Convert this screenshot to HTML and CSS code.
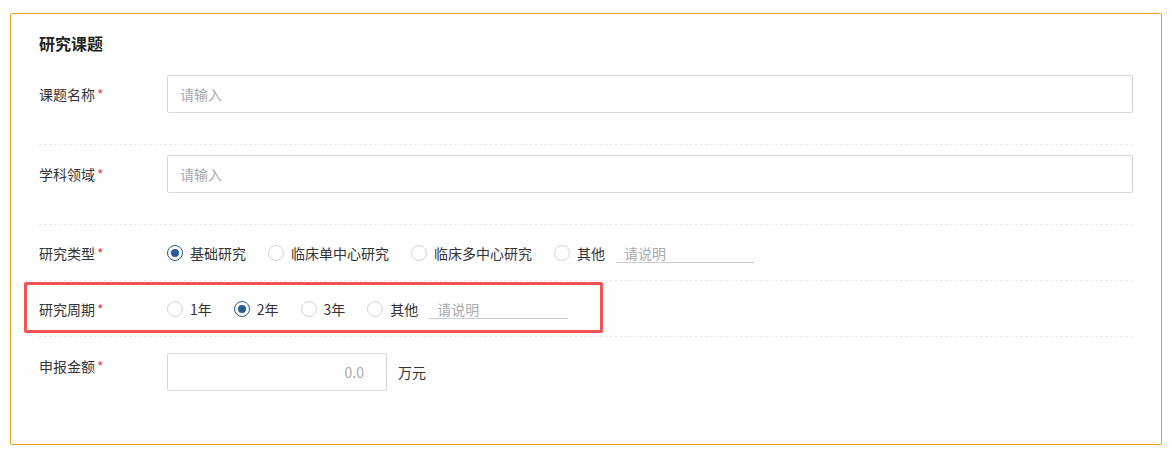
FILE: index.html
```html
<!DOCTYPE html>
<html lang="zh-CN">
<head>
<meta charset="utf-8">
<title>研究课题</title>
<link rel="stylesheet" href="styles.css">
</head>
<body>
<section class="card">
  <h2 class="card-title">研究课题</h2>

  <div class="form-item">
    <label class="form-label">课题名称<span class="req">*</span></label>
    <div class="form-control"><input class="text-input" type="text" placeholder="请输入"></div>
  </div>

  <div class="form-item">
    <label class="form-label">学科领域<span class="req">*</span></label>
    <div class="form-control"><input class="text-input" type="text" placeholder="请输入"></div>
  </div>

  <div class="form-item form-item--radio">
    <label class="form-label">研究类型<span class="req">*</span></label>
    <div class="radio-group">
      <label class="radio is-checked"><span class="radio-dot"></span><span class="radio-text">基础研究</span></label>
      <label class="radio"><span class="radio-dot"></span><span class="radio-text">临床单中心研究</span></label>
      <label class="radio"><span class="radio-dot"></span><span class="radio-text">临床多中心研究</span></label>
      <label class="radio radio--other"><span class="radio-dot"></span><span class="radio-text">其他</span></label>
      <input class="line-input" type="text" placeholder="请说明">
    </div>
  </div>

  <div class="form-item form-item--radio">
    <label class="form-label">研究周期<span class="req">*</span></label>
    <div class="radio-group">
      <label class="radio"><span class="radio-dot"></span><span class="radio-text">1年</span></label>
      <label class="radio is-checked"><span class="radio-dot"></span><span class="radio-text">2年</span></label>
      <label class="radio"><span class="radio-dot"></span><span class="radio-text">3年</span></label>
      <label class="radio radio--other"><span class="radio-dot"></span><span class="radio-text">其他</span></label>
      <input class="line-input line-input--short" type="text" placeholder="请说明">
    </div>
  </div>

  <div class="form-item form-item--last">
    <label class="form-label form-label--top">申报金额<span class="req">*</span></label>
    <div class="amount">
      <input class="text-input amount-input" type="text" placeholder="0.0">
      <span class="unit">万元</span>
    </div>
  </div>

  <div class="highlight"></div>
</section>
</body>
</html>
```

FILE: styles.css
```css
* {
  box-sizing: border-box;
}

html, body {
  margin: 0;
  padding: 0;
  background: #ffffff;
}

body {
  padding: 13px 11px 0 10px;
  font-family: "Noto Sans CJK SC", "Microsoft YaHei", sans-serif;
  font-size: 14px;
  color: #333;
}

.card {
  position: relative;
  width: 1152px;
  height: 432px;
  border: 1px solid #f0a21e;
  border-radius: 2px;
  padding: 18px 28px 0 28px;
}

.card-title {
  margin: 0 0 11px;
  font-size: 16px;
  line-height: 22px;
  font-weight: 700;
  color: #222;
}

.form-item {
  display: flex;
  align-items: center;
  padding: 10px 0 31px;
  border-bottom: 1px dashed #ebebef;
}

.form-item--radio {
  padding: 10px 0 9px;
}

.form-item--last {
  align-items: flex-start;
  border-bottom: none;
  padding-top: 16px;
}

.form-label {
  flex: 0 0 128px;
  line-height: 20px;
  color: #333;
}

.form-label--top {
  line-height: 26px;
}

.req {
  color: #e0453d;
  margin-left: 2px;
}

.form-control {
  flex: 1;
}

.text-input {
  display: block;
  width: 100%;
  height: 38px;
  border: 1px solid #d5d7dd;
  border-radius: 2px;
  padding: 0 12px;
  font: inherit;
  font-size: 14px;
  color: #333;
  outline: none;
}

.text-input::placeholder,
.line-input::placeholder {
  color: #a6aab2;
}

.radio-group {
  display: flex;
  align-items: center;
  height: 36px;
}

.radio {
  display: flex;
  align-items: center;
  margin-right: 22px;
  line-height: 20px;
  color: #333;
}

.radio--other {
  margin-right: 11px;
}

.radio-dot {
  width: 16px;
  height: 16px;
  border: 1px solid #d3d5db;
  border-radius: 50%;
  margin-right: 7px;
  display: flex;
  align-items: center;
  justify-content: center;
  background: #fff;
}

.radio.is-checked .radio-dot {
  border-color: #2a5a96;
}

.radio.is-checked .radio-dot::after {
  content: "";
  width: 8px;
  height: 8px;
  border-radius: 50%;
  background: #2a5a96;
}

.line-input {
  width: 138px;
  height: 18px;
  margin-top: 2px;
  border: none;
  border-bottom: 1px solid #c9cbd2;
  padding: 0 0 1px 8px;
  font: inherit;
  font-size: 14px;
  line-height: 16px;
  color: #333;
  outline: none;
  background: transparent;
}

.line-input--short {
  width: 139px;
}

.amount {
  display: flex;
  align-items: center;
}

.amount-input {
  width: 220px;
  text-align: right;
  padding-right: 22px;
}

.unit {
  margin-left: 11px;
  color: #333;
}

/* red frame drawn over the study period row */
.highlight {
  position: absolute;
  left: 13px;
  top: 268px;
  width: 579px;
  height: 51px;
  border: 3px solid #f25353;
  border-radius: 2px;
  pointer-events: none;
}
```
